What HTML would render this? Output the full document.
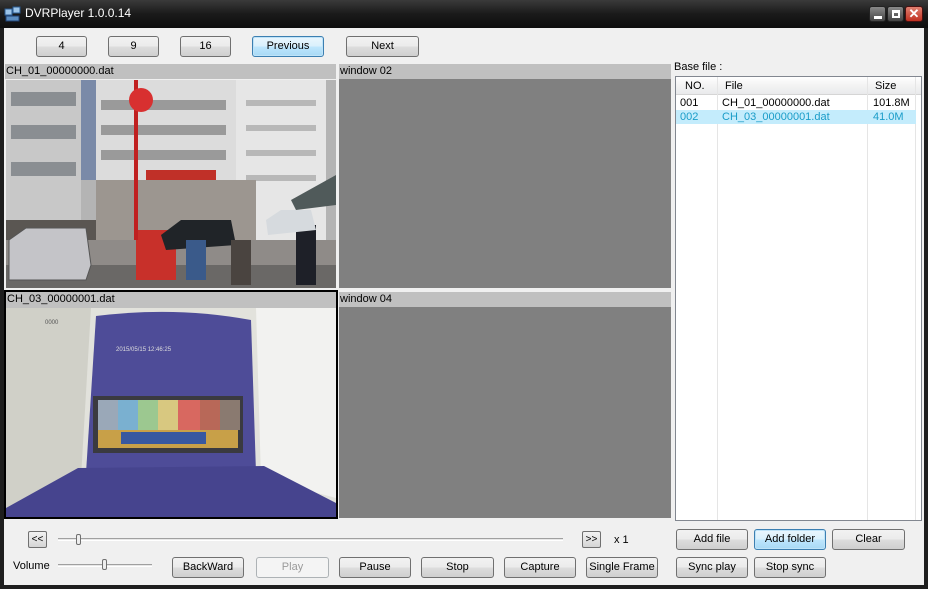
<!DOCTYPE html>
<html><head><meta charset="utf-8"><style>
*{box-sizing:border-box;margin:0;padding:0}
body{width:928px;height:589px;overflow:hidden;background:#1e1e1e;font-family:"Liberation Sans",Tahoma,sans-serif;font-size:11px;color:#000;position:relative}
.a{position:absolute}
.title{left:0;top:0;width:928px;height:28px;background:linear-gradient(#3a3a3a,#1a1a1a 50%,#0e0e0e);color:#fff;font-size:12px}
.client{left:4px;top:28px;width:920px;height:557px;background:#f0f0f0}
.btn{position:absolute;height:21px;border:1px solid #707070;border-radius:3px;background:linear-gradient(#f2f2f2,#ebebeb 50%,#dddddd 51%,#cfcfcf);text-align:center;line-height:19px;font-size:11px}
.btn.f{border-color:#3c7fb1;background:linear-gradient(#eaf6fd,#d9f0fc 50%,#bee6fd 51%,#a7d9f5);box-shadow:inset 0 0 0 1px #bfe3f8}
.btn.d{border-color:#adb2b5;color:#9a9a9a;background:#f4f4f4}
.lbl{position:absolute;height:15px;background:#c0c0c0;font-size:11px;line-height:15px;padding-left:1px}
.gray{position:absolute;background:#808080}
.sm{position:absolute;width:19px;height:17px;border:1px solid #707070;border-radius:2px;background:linear-gradient(#f2f2f2,#d5d5d5);font-size:10px;text-align:center;line-height:15px}
.track{position:absolute;height:3px;border-top:1px solid #a0a0a0;border-bottom:1px solid #fff;background:#e7e7e7}
.thumb{position:absolute;width:5px;height:11px;border:1px solid #707070;border-radius:2px;background:#eee}
.row{position:absolute;left:676px;width:244px;height:14px;line-height:14px}
.row span{position:absolute}
</style></head><body>
<div class="a title">
 <svg class="a" style="left:4px;top:6px" width="17" height="16"><rect x="1" y="3" width="7" height="6" fill="#9cc4e8" stroke="#2a5a90"/><rect x="9" y="1" width="7" height="6" fill="#9cc4e8" stroke="#2a5a90"/><rect x="2" y="10" width="13" height="5" fill="#5b8cc0" stroke="#1e3f70"/></svg>
 <span class="a" style="left:25px;top:6px">DVRPlayer 1.0.0.14</span>
 <div class="a" style="left:869px;top:6px;width:17px;height:16px;border:1px solid #222;border-radius:3px;background:linear-gradient(#8a8a8a,#444)"><div class="a" style="left:4px;top:9px;width:8px;height:3px;background:#fff"></div></div>
 <div class="a" style="left:887px;top:6px;width:17px;height:16px;border:1px solid #222;border-radius:3px;background:linear-gradient(#8a8a8a,#444)"><div class="a" style="left:4px;top:3px;width:8px;height:8px;border:2px solid #fff;border-top-width:3px"></div></div>
 <div class="a" style="left:905px;top:6px;width:18px;height:16px;border:1px solid #4a1010;border-radius:3px;background:linear-gradient(#e08070,#c03020);color:#fff;font-weight:bold;font-size:13px;text-align:center;line-height:14px">✕</div>
</div>
<div class="a client"></div>

<div class="btn" style="left:36px;top:36px;width:51px">4</div>
<div class="btn" style="left:108px;top:36px;width:51px">9</div>
<div class="btn" style="left:180px;top:36px;width:51px">16</div>
<div class="btn f" style="left:252px;top:36px;width:72px">Previous</div>
<div class="btn" style="left:346px;top:36px;width:73px">Next</div>

<!-- panel 1 -->
<div class="lbl" style="left:5px;top:64px;width:331px">CH_01_00000000.dat</div>
<svg class="a" style="left:6px;top:80px" width="330" height="208" viewBox="0 0 330 208">
 <rect width="330" height="208" fill="#b4b4b4"/>
 <rect x="0" y="0" width="75" height="140" fill="#c8c8c8"/>
 <g fill="#8a8e92"><rect x="5" y="12" width="65" height="14"/><rect x="5" y="45" width="65" height="14"/><rect x="5" y="82" width="65" height="14"/></g>
 <rect x="75" y="0" width="20" height="100" fill="#7a8aa8"/>
 <rect x="90" y="0" width="140" height="100" fill="#dcdcdc"/>
 <g fill="#9a9a9a"><rect x="95" y="20" width="125" height="10"/><rect x="95" y="45" width="125" height="10"/><rect x="95" y="70" width="125" height="10"/></g>
 <rect x="230" y="0" width="90" height="160" fill="#e6e6e6"/>
 <g fill="#b8b8b8"><rect x="240" y="20" width="70" height="6"/><rect x="240" y="45" width="70" height="6"/><rect x="240" y="70" width="70" height="6"/><rect x="240" y="95" width="70" height="6"/></g>
 <rect x="90" y="100" width="160" height="60" fill="#9c9690"/>
 <rect x="140" y="90" width="70" height="10" fill="#c03028"/>
 <path d="M285 120 L330 95 L330 125 L290 130Z" fill="#505a5a"/>
 <rect x="0" y="140" width="90" height="30" fill="#5a5652"/>
 <rect x="0" y="160" width="330" height="48" fill="#8f8b88"/>
 <rect x="0" y="185" width="330" height="23" fill="#6a6866"/>
 <path d="M3 160 L20 148 L80 148 L85 185 L80 200 L3 200Z" fill="#c4c4c8" stroke="#555"/>
 <rect x="130" y="150" width="40" height="50" fill="#c8302a"/>
 <rect x="128" y="0" width="4" height="160" fill="#c02020"/>
 <circle cx="135" cy="20" r="12" fill="#d83030"/>
 <path d="M155 155 L175 140 L225 140 L230 165 L160 170Z" fill="#202428"/>
 <rect x="180" y="160" width="20" height="40" fill="#3a5a8a"/>
 <rect x="225" y="160" width="20" height="45" fill="#4a4440"/>
 <rect x="290" y="145" width="20" height="60" fill="#1e2028"/>
 <path d="M260 140 L275 130 L305 130 L310 150 L262 155Z" fill="#d6dade"/>
</svg>

<!-- panel 2 -->
<div class="lbl" style="left:339px;top:64px;width:332px">window 02</div>
<div class="gray" style="left:339px;top:79px;width:332px;height:209px"></div>

<!-- panel 3 -->
<div class="a" style="left:4px;top:290px;width:334px;height:229px;border:2px solid #000;background:#c0c0c0"></div>
<div class="lbl" style="left:6px;top:292px;width:330px">CH_03_00000001.dat</div>
<svg class="a" style="left:6px;top:308px" width="330" height="209" viewBox="0 0 330 209">
 <rect width="330" height="209" fill="#e2e2dc"/>
 <path d="M0 0 L85 0 L75 170 L0 209Z" fill="#d0d0c8"/>
 <path d="M330 0 L250 0 L255 170 L330 190Z" fill="#f2f2f0"/>
 <path d="M90 8 Q170 -2 245 12 L250 165 L80 165Z" fill="#4e4c98"/>
 <path d="M72 160 L258 158 L330 195 L330 209 L0 209 L0 200Z" fill="#46448e"/>
 <rect x="87" y="88" width="150" height="57" fill="#3a3a40"/>
 <g>
  <rect x="92" y="92" width="20" height="30" fill="#9aa8b8"/><rect x="112" y="92" width="20" height="30" fill="#7ab0d0"/><rect x="132" y="92" width="20" height="30" fill="#9cc890"/><rect x="152" y="92" width="20" height="30" fill="#d8c880"/><rect x="172" y="92" width="22" height="30" fill="#d86860"/><rect x="194" y="92" width="20" height="30" fill="#b86858"/><rect x="214" y="92" width="20" height="30" fill="#8a7a70"/>
 </g>
 <rect x="92" y="122" width="140" height="18" fill="#c8a048"/>
 <rect x="115" y="124" width="85" height="12" fill="#3858a0"/>
 <text x="39" y="16" font-size="6" fill="#555" font-family="Liberation Sans">0000</text>
 <text x="110" y="43" font-size="6" fill="#ddd" font-family="Liberation Sans">2015/05/15 12:46:25</text>
</svg>

<!-- panel 4 -->
<div class="lbl" style="left:339px;top:292px;width:332px">window 04</div>
<div class="gray" style="left:339px;top:307px;width:332px;height:211px"></div>

<!-- list -->
<div class="a" style="left:674px;top:61px">Base file :</div>
<div class="a" style="left:675px;top:76px;width:247px;height:445px;background:#fff;border:1px solid #828790"></div>
<div class="a" style="left:676px;top:77px;width:245px;height:18px;background:linear-gradient(#fff,#f3f3f3 50%,#e9eaec);border-bottom:1px solid #d5d5d5"></div>
<div class="a" style="left:717px;top:77px;width:1px;height:443px;background:#e5e5e5"></div>
<div class="a" style="left:867px;top:77px;width:1px;height:443px;background:#e5e5e5"></div>
<div class="a" style="left:915px;top:77px;width:1px;height:443px;background:#e5e5e5"></div>
<div class="a" style="left:685px;top:80px">NO.</div>
<div class="a" style="left:725px;top:80px">File</div>
<div class="a" style="left:875px;top:80px">Size</div>
<div class="row" style="top:96px"><span style="left:4px">001</span><span style="left:46px">CH_01_00000000.dat</span><span style="left:197px">101.8M</span></div>
<div class="row" style="top:110px;width:240px;background:#c4ecfc;color:#1a9cc8"><span style="left:4px">002</span><span style="left:46px">CH_03_00000001.dat</span><span style="left:197px">41.0M</span></div>

<!-- bottom controls -->
<div class="sm" style="left:28px;top:531px">&lt;&lt;</div>
<div class="track" style="left:58px;top:538px;width:505px"></div>
<div class="thumb" style="left:76px;top:534px"></div>
<div class="sm" style="left:582px;top:531px">&gt;&gt;</div>
<div class="a" style="left:614px;top:534px">x 1</div>
<div class="a" style="left:13px;top:560px">Volume</div>
<div class="track" style="left:58px;top:564px;width:94px"></div>
<div class="thumb" style="left:102px;top:559px"></div>

<div class="btn" style="left:172px;top:557px;width:72px">BackWard</div>
<div class="btn d" style="left:256px;top:557px;width:73px">Play</div>
<div class="btn" style="left:339px;top:557px;width:72px">Pause</div>
<div class="btn" style="left:421px;top:557px;width:73px">Stop</div>
<div class="btn" style="left:504px;top:557px;width:72px">Capture</div>
<div class="btn" style="left:586px;top:557px;width:72px">Single Frame</div>
<div class="btn" style="left:676px;top:529px;width:72px">Add file</div>
<div class="btn f" style="left:754px;top:529px;width:72px">Add folder</div>
<div class="btn" style="left:832px;top:529px;width:73px">Clear</div>
<div class="btn" style="left:676px;top:557px;width:72px">Sync play</div>
<div class="btn" style="left:754px;top:557px;width:72px">Stop sync</div>
</body></html>
